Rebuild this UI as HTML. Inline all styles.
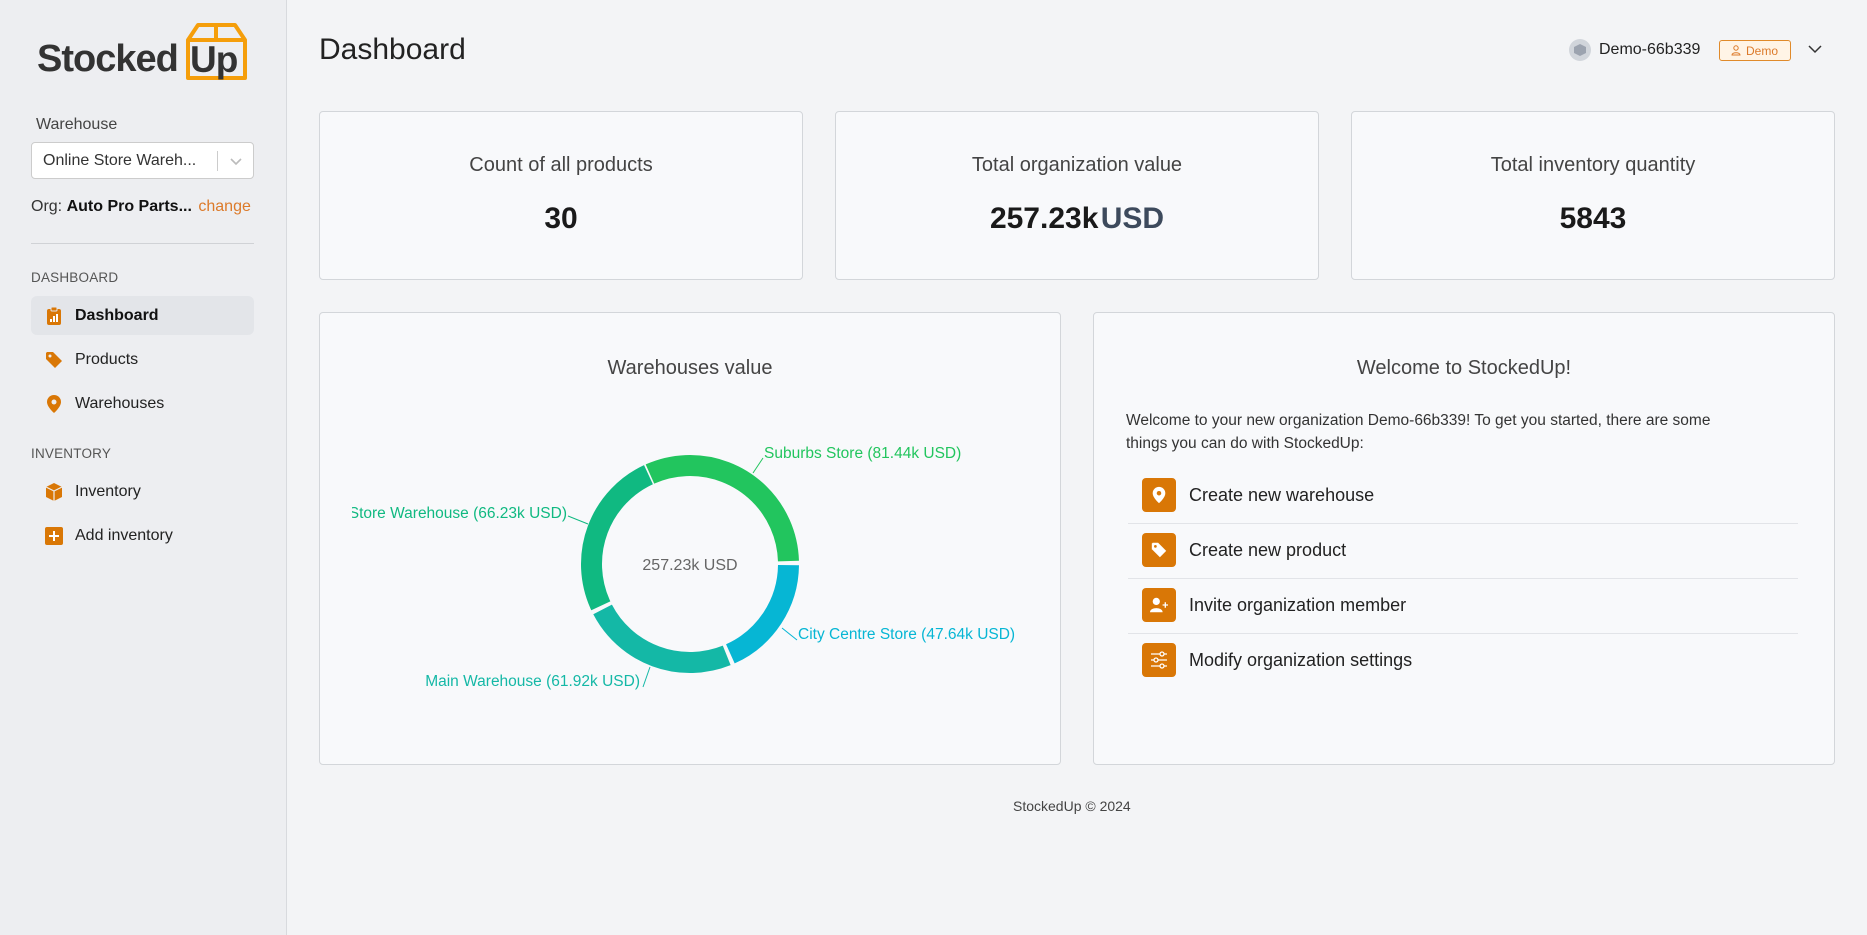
<!DOCTYPE html>
<html><head><meta charset="utf-8"><style>
*{box-sizing:border-box;margin:0;padding:0}
body{width:1867px;height:935px;overflow:hidden;font-family:"Liberation Sans",Arial,sans-serif;background:#f3f4f6;color:#222;position:relative}
.side{position:absolute;left:0;top:0;width:287px;height:935px;background:#edeef1;border-right:1px solid #d8dade}
.abs{position:absolute}
.card{position:absolute;background:#f8f9fb;border:1px solid #d3d6da;border-radius:4px}
.nav{position:absolute;left:31px;width:223px;height:39px;border-radius:6px;display:flex;align-items:center;padding-left:13px;font-size:16px;color:#222}
.nav svg{width:20px;height:20px;margin-right:11px}
.sec{position:absolute;left:31px;font-size:13.5px;color:#555;letter-spacing:.2px}
.stt{position:absolute;left:0;right:0;text-align:center;font-size:20px;color:#444;top:42px}
.stv{position:absolute;left:0;right:0;text-align:center;font-size:30px;font-weight:bold;color:#1a1a1a;top:90px}
.item{position:absolute;left:1142px;height:34px;display:flex;align-items:center;font-size:18px;color:#222}
.ic{width:34px;height:34px;background:#d97706;border-radius:4px;margin-right:13px;display:flex;align-items:center;justify-content:center}
.sep{position:absolute;left:1128px;width:670px;height:1px;background:#e2e4e8}
</style></head><body>
<div class="side">
  <div class="abs" style="left:37px;top:38px;font-size:38px;font-weight:bold;color:#333;letter-spacing:-1px">Stocked</div>
  <svg class="abs" style="left:184px;top:22px" width="65" height="60" viewBox="0 0 65 60">
    <path d="M4 18 L14 3 L51 3 L61 18 L61 56 L4 56 Z" fill="none" stroke="#f59e0b" stroke-width="4" stroke-linejoin="round"/>
    <path d="M4 18 L61 18 M32 3 L32 18" stroke="#f59e0b" stroke-width="4"/>
  </svg>
  <div class="abs" style="left:190px;top:39px;font-size:37px;font-weight:bold;color:#333;letter-spacing:-1px">Up</div>
  <div class="abs" style="left:36px;top:116px;font-size:16px;color:#444">Warehouse</div>
  <div class="abs" style="left:31px;top:142px;width:223px;height:37px;background:#fff;border:1px solid #ccc;border-radius:4px">
    <span class="abs" style="left:11px;top:9px;font-size:16px;color:#333">Online Store Wareh...</span>
    <span class="abs" style="left:185px;top:8px;width:1px;height:20px;background:#ccc"></span>
    <svg class="abs" style="left:197px;top:11px" width="14" height="14" viewBox="0 0 14 14"><path d="M2 5l5 5 5-5" fill="none" stroke="#bbb" stroke-width="1.6"/></svg>
  </div>
  <div class="abs" style="left:31px;top:198px;font-size:16px;color:#333">Org: <b style="color:#111">Auto Pro Parts...</b> <span style="color:#dc7a2a;margin-left:2px">change</span></div>
  <div class="abs" style="left:31px;top:243px;width:223px;height:1px;background:#d0d2d6"></div>
  <div class="sec" style="top:270px">DASHBOARD</div>
  <div class="nav" style="top:296px;background:#e3e5e9;font-weight:bold;color:#111"><svg viewBox="0 0 20 20"><rect x="3" y="3" width="14" height="16" rx="2" fill="#d97706"/><rect x="7" y="1" width="6" height="4" rx="1" fill="#d97706" stroke="#e3e5e9"/><rect x="6" y="13" width="2" height="3" fill="#fff"/><rect x="9" y="10" width="2" height="6" fill="#fff"/><rect x="12" y="8" width="2" height="8" fill="#fff"/></svg>Dashboard</div>
  <div class="nav" style="top:340px"><svg viewBox="0 0 20 20"><path d="M2 3v6l9 9 7-7-9-9H3z" fill="#d97706"/><circle cx="6" cy="6" r="1.5" fill="#edeef1"/></svg>Products</div>
  <div class="nav" style="top:384px"><svg viewBox="0 0 20 20"><path d="M10 1a7 7 0 0 1 7 7c0 5-7 11-7 11S3 13 3 8a7 7 0 0 1 7-7z" fill="#d97706"/><circle cx="10" cy="8" r="2.5" fill="#edeef1"/></svg>Warehouses</div>
  <div class="sec" style="top:446px">INVENTORY</div>
  <div class="nav" style="top:472px"><svg viewBox="0 0 20 20"><path d="M10 1l8 4v10l-8 4-8-4V5z" fill="#d97706"/><path d="M2 5l8 4 8-4M10 9v10" stroke="#edeef1" stroke-width="1.2" fill="none"/></svg>Inventory</div>
  <div class="nav" style="top:516px"><svg viewBox="0 0 20 20"><rect x="1" y="1" width="18" height="18" rx="2" fill="#d97706"/><path d="M10 5v10M5 10h10" stroke="#fff" stroke-width="2"/></svg>Add inventory</div>
</div>

<div class="abs" style="left:319px;top:33px;font-size:30px;color:#222">Dashboard</div>
<div class="abs" style="left:1569px;top:39px;width:22px;height:22px;border-radius:50%;background:#d1d5db"></div>
<svg class="abs" style="left:1573px;top:43px" width="14" height="14" viewBox="0 0 14 14"><path d="M7 1l6 3v6l-6 3-6-3V4z" fill="#9ca3af"/></svg>
<div class="abs" style="left:1599px;top:41px;font-size:16px;color:#222">Demo-66b339</div>
<div class="abs" style="left:1719px;top:40px;width:72px;height:21px;border:1px solid #e08a2a;border-radius:3px;background:#fff4e6;font-size:12px;color:#dc7a2a;padding:3px 0 0 26px">Demo</div>
<svg class="abs" style="left:1730px;top:44px" width="12" height="12" viewBox="0 0 12 12"><circle cx="6" cy="4" r="2.2" fill="none" stroke="#dc7a2a"/><path d="M2 11c0-3 8-3 8 0z" fill="none" stroke="#dc7a2a"/></svg>
<svg class="abs" style="left:1808px;top:44px" width="14" height="10" viewBox="0 0 14 10"><path d="M1 2l6 6 6-6" fill="none" stroke="#333" stroke-width="1.5"/></svg>

<div class="card" style="left:319px;top:111px;width:484px;height:169px"><div class="stt">Count of all products</div><div class="stv">30</div></div>
<div class="card" style="left:835px;top:111px;width:484px;height:169px"><div class="stt">Total organization value</div><div class="stv">257.23k <span style="color:#3d4a5c;margin-left:-6px">USD</span></div></div>
<div class="card" style="left:1351px;top:111px;width:484px;height:169px"><div class="stt">Total inventory quantity</div><div class="stv">5843</div></div>

<div class="card" style="left:319px;top:312px;width:742px;height:453px"><div class="stt" style="top:44px">Warehouses value</div></div>
<svg class="abs" style="left:352px;top:400px" width="675" height="310" viewBox="352 400 675 310">
  <g transform="rotate(-114 690 564)" fill="none" stroke-width="21">
    <circle cx="690" cy="564" r="98.5" stroke="#22c55e" stroke-dasharray="193 1000" stroke-dashoffset="0"/>
    <circle cx="690" cy="564" r="98.5" stroke="#06b6d4" stroke-dasharray="112 1000" stroke-dashoffset="-197"/>
    <circle cx="690" cy="564" r="98.5" stroke="#14b8a6" stroke-dasharray="145 1000" stroke-dashoffset="-313"/>
    <circle cx="690" cy="564" r="98.5" stroke="#10b981" stroke-dasharray="155 1000" stroke-dashoffset="-462"/>
  </g>
  <g stroke-width="1" fill="none">
    <path d="M753 473L763 458" stroke="#22c55e"/>
    <path d="M588 524L568 516" stroke="#10b981"/>
    <path d="M782 628L797 640" stroke="#06b6d4"/>
    <path d="M650 667L643 687" stroke="#14b8a6"/>
  </g>
  <g font-family="Liberation Sans, Arial, sans-serif" font-size="15.5">
    <text x="764" y="458" fill="#22c55e">Suburbs Store (81.44k USD)</text>
    <text x="567" y="518" fill="#10b981" text-anchor="end">Online Store Warehouse (66.23k USD)</text>
    <text x="798" y="639" fill="#06b6d4">City Centre Store (47.64k USD)</text>
    <text x="640" y="686" fill="#14b8a6" text-anchor="end">Main Warehouse (61.92k USD)</text>
    <text x="690" y="570" fill="#666" text-anchor="middle" font-size="16">257.23k USD</text>
  </g>
</svg>

<div class="card" style="left:1093px;top:312px;width:742px;height:453px"><div class="stt" style="top:44px">Welcome to StockedUp!</div></div>
<div class="abs" style="left:1126px;top:409px;font-size:15.5px;color:#333;line-height:23px;width:600px">Welcome to your new organization Demo-66b339! To get you started, there are some things you can do with StockedUp:</div>
<div class="item" style="top:478px"><div class="ic"><svg width="18" height="18" viewBox="0 0 20 20"><path d="M10 1a7 7 0 0 1 7 7c0 5-7 11-7 11S3 13 3 8a7 7 0 0 1 7-7z" fill="#fff"/><circle cx="10" cy="8" r="2.5" fill="#d97706"/></svg></div>Create new warehouse</div>
<div class="sep" style="top:523px"></div>
<div class="item" style="top:533px"><div class="ic"><svg width="18" height="18" viewBox="0 0 20 20"><path d="M2 3v6l9 9 7-7-9-9H3z" fill="#fff"/><circle cx="6" cy="6" r="1.5" fill="#d97706"/></svg></div>Create new product</div>
<div class="sep" style="top:578px"></div>
<div class="item" style="top:588px"><div class="ic"><svg width="20" height="18" viewBox="0 0 22 20"><circle cx="8" cy="6" r="4" fill="#fff"/><path d="M1 18c0-6 14-6 14 0z" fill="#fff"/><path d="M18 7v6M15 10h6" stroke="#fff" stroke-width="1.5"/></svg></div>Invite organization member</div>
<div class="sep" style="top:633px"></div>
<div class="item" style="top:643px"><div class="ic"><svg width="20" height="18" viewBox="0 0 20 18" fill="none" stroke="#fff" stroke-width="1.3"><path d="M2 3h16M2 9h16M2 15h16"/><circle cx="13" cy="3" r="2" fill="#d97706"/><circle cx="7" cy="9" r="2" fill="#d97706"/><circle cx="13" cy="15" r="2" fill="#d97706"/></svg></div>Modify organization settings</div>

<div class="abs" style="left:1013px;top:798px;font-size:14px;color:#444">StockedUp © 2024</div>
</body></html>
